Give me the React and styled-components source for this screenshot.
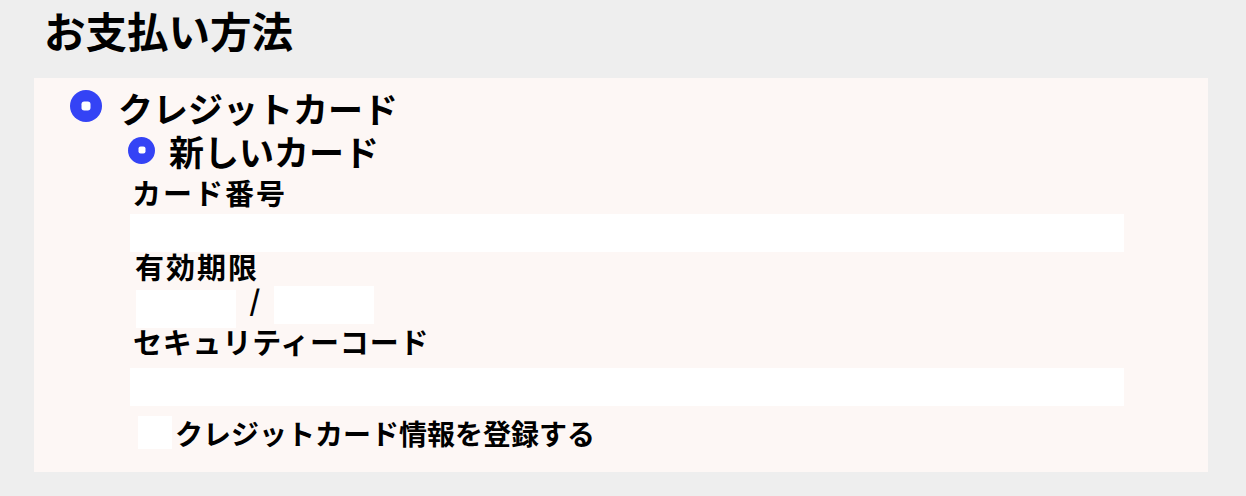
import React from 'react'
import styled, { createGlobalStyle } from 'styled-components'

const GlobalStyle = createGlobalStyle`
  html, body {
    margin: 0;
    background: #eeeeee;
    font-family: 'Noto Sans CJK JP', 'Noto Sans', sans-serif;
    color: #000;
  }
`

const Page = styled.div`
  width: 1246px;
  height: 496px;
  overflow: hidden;
  background: #eeeeee;
`

const Title = styled.h2`
  margin: 0;
  padding: 9px 0 0 44px;
  height: 78px;
  box-sizing: border-box;
  font-size: 41.5px;
  line-height: 42px;
  font-weight: 700;
`

const Panel = styled.section`
  margin: 0 38px 0 34px;
  height: 394px;
  box-sizing: border-box;
  padding: 10px 0 0 36px;
  background: #fdf7f5;
`

const OptionRow = styled.label`
  display: flex;
  align-items: center;
  height: ${p => p.$height}px;
  margin-left: ${p => p.$indent || 0}px;
  margin-top: ${p => p.$top || 0}px;
  gap: ${p => p.$gap}px;
`

const Radio = styled.span`
  position: relative;
  flex: none;
  width: ${p => p.$size}px;
  height: ${p => p.$size}px;
  border-radius: 50%;
  background: #3443f5;

  &::after {
    content: '';
    position: absolute;
    left: 50%;
    top: 50%;
    width: ${p => Math.round(p.$size * 0.27)}px;
    height: ${p => Math.round(p.$size * 0.27)}px;
    transform: translate(-50%, -50%);
    border-radius: 30%;
    background: #fff;
  }
`

const OptionText = styled.span`
  font-size: 35px;
  line-height: 1;
  font-weight: 700;
  padding-top: ${p => p.$shift || 0}px;
`

const Fields = styled.div`
  display: flex;
  flex-direction: column;
  margin-left: 60px;
`

const Label = styled.div`
  font-size: 29px;
  line-height: 1;
  font-weight: 700;
  letter-spacing: ${p => p.$spacing ?? 2}px;
  margin-left: ${p => p.$indent || 2}px;
  margin-top: ${p => p.$top || 0}px;
`

const TextInput = styled.div`
  width: 994px;
  height: 38px;
  background: #fff;
  margin-top: ${p => p.$top || 0}px;
`

const ExpiryRow = styled.div`
  display: flex;
  align-items: flex-start;
  margin-left: 6px;
  margin-top: 5px;
`

const SmallInput = styled.div`
  width: 100px;
  height: 38px;
  background: #fff;
  margin-top: ${p => p.$top || 0}px;
`

const Slash = styled.span`
  width: 38px;
  text-align: center;
  font-size: 28px;
  line-height: 28px;
  font-weight: 700;
  margin-top: -1px;
`

const CheckRow = styled.label`
  display: flex;
  align-items: center;
  gap: 3px;
  margin: 10px 0 0 8px;
`

const CheckBox = styled.span`
  width: 34px;
  height: 33px;
  background: #fff;
  flex: none;
`

const CheckText = styled.span`
  font-size: 28px;
  line-height: 1;
  font-weight: 700;
`

export default function App() {
  return (
    <Page>
      <GlobalStyle />
      <Title>お支払い方法</Title>
      <Panel>
        <OptionRow $height={36} $gap={16}>
          <Radio $size={32} />
          <OptionText $shift={2}>クレジットカード</OptionText>
        </OptionRow>
        <OptionRow $height={32} $indent={58} $top={10} $gap={14}>
          <Radio $size={27} />
          <OptionText>新しいカード</OptionText>
        </OptionRow>
        <Fields>
          <Label $top={12}>カード番号</Label>
          <TextInput $top={7} />
          <Label $indent={5}>有効期限</Label>
          <ExpiryRow>
            <SmallInput $top={4} />
            <Slash>/</Slash>
            <SmallInput />
          </ExpiryRow>
          <Label $indent={3} $top={-1} $spacing={0.8}>セキュリティーコード</Label>
          <TextInput $top={12} />
          <CheckRow>
            <CheckBox />
            <CheckText>クレジットカード情報を登録する</CheckText>
          </CheckRow>
        </Fields>
      </Panel>
    </Page>
  )
}
